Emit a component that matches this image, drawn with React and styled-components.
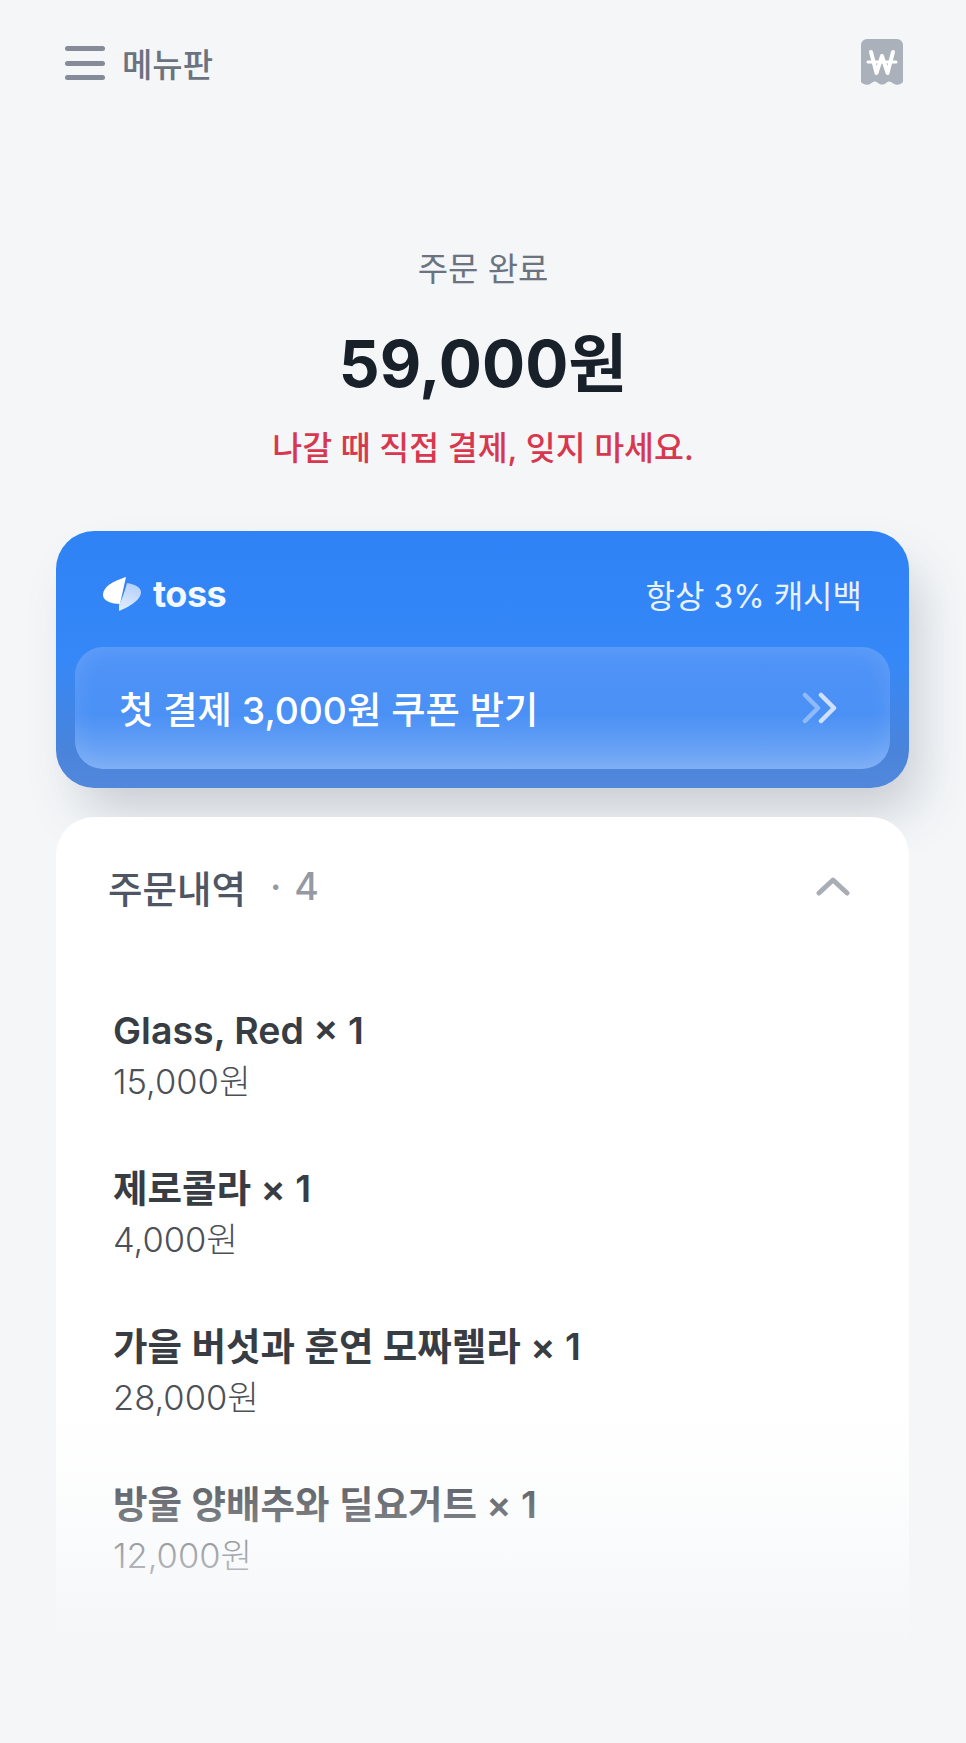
import styled, { createGlobalStyle } from "styled-components";

const GlobalStyle = createGlobalStyle`
  html, body {
    margin: 0;
    padding: 0;
    background: #f4f6f8;
  }
  * { box-sizing: border-box; }
`;

const Page = styled.div`
  width: 966px;
  height: 1743px;
  overflow: hidden;
  background: #f4f6f8;
  font-family: "Inter", "Noto Sans CJK KR", sans-serif;
`;

const TopBar = styled.header`
  display: flex;
  align-items: center;
  justify-content: space-between;
  height: 126px;
  padding: 0 63px 0 65px;
`;

const MenuButton = styled.div`
  display: flex;
  align-items: center;
  gap: 17px;
`;

const MenuIcon = styled.div`
  display: flex;
  flex-direction: column;
  justify-content: space-between;
  width: 40px;
  height: 34px;

  span {
    display: block;
    height: 5px;
    border-radius: 3px;
    background: #868b99;
  }
`;

const MenuLabel = styled.span`
  font-size: 33px;
  font-weight: 500;
  color: #6b7280;
`;

const Summary = styled.section`
  display: flex;
  flex-direction: column;
  align-items: center;
  padding-top: 118px;
`;

const StatusLabel = styled.div`
  font-size: 33px;
  line-height: 50px;
  color: #6b7380;
`;

const TotalPrice = styled.div`
  margin-top: 30px;
  font-size: 64px;
  line-height: 80px;
  font-weight: 700;
  color: #18202a;
`;

const PayNotice = styled.div`
  margin-top: 22px;
  font-size: 32.500px;
  line-height: 46px;
  font-weight: 500;
  color: #d8384f;
`;

const TossCard = styled.section`
  margin: 59px 57px 0 56px;
  height: 257px;
  padding: 0 19px 19px;
  display: flex;
  flex-direction: column;
  border-radius: 38px;
  background: linear-gradient(180deg, #2f82f5 0%, #3688f8 50%, #4a84da 86%, #5288dc 100%);
  box-shadow: 16px 30px 50px -8px rgba(70, 84, 104, 0.26);
`;

const CardTop = styled.div`
  flex: 1;
  display: flex;
  align-items: center;
  justify-content: space-between;
  padding: 10px 28px 0;
`;

const TossBrand = styled.div`
  display: flex;
  align-items: center;
  gap: 12px;
`;

const TossWord = styled.span`
  font-size: 36px;
  font-weight: 700;
  color: #f4f8ff;
  letter-spacing: -0.5px;
`;

const Cashback = styled.span`
  font-size: 32px;
  color: #e9f2ff;
`;

const CouponBar = styled.div`
  height: 122px;
  display: flex;
  align-items: center;
  justify-content: space-between;
  padding: 0 52px 0 44px;
  border-radius: 28px;
  background: linear-gradient(180deg, #5094f8 0%, #4a90f5 55%, #78abf5 100%);
  box-shadow: inset 0 0 26px rgba(255, 255, 255, 0.12);
`;

const CouponText = styled.span`
  font-size: 37.300px;
  font-weight: 500;
  color: #fff;
`;

const OrderPanel = styled.section`
  position: relative;
  margin: 29px 57px 0 56px;
  height: 843px;
  padding: 0 57px;
  border-radius: 38px;
  background: #fff;
  overflow: hidden;
`;

const PanelHeader = styled.div`
  display: flex;
  align-items: center;
  justify-content: space-between;
  height: 138px;
  padding-right: 2px;
`;

const PanelTitle = styled.div`
  display: flex;
  align-items: center;
  margin-left: -5px;
`;

const TitleText = styled.span`
  font-size: 37.500px;
  font-weight: 500;
  color: #4e5665;
`;

const TitleCount = styled.span`
  margin-left: 24px;
  font-size: 37.500px;
  font-weight: 500;
  word-spacing: 3px;
  color: #959aa2;
`;

const OrderList = styled.ul`
  list-style: none;
  margin: 0;
  padding: 49px 0 0;
  display: flex;
  flex-direction: column;
  gap: 46px;
`;

const OrderRow = styled.li`
  display: flex;
  flex-direction: column;
  height: 112px;
`;

const ItemName = styled.div`
  font-size: 37.500px;
  line-height: 54px;
  font-weight: 600;
  color: #383c43;
`;

const ItemPrice = styled.div`
  margin-top: -2px;
  font-size: 34.500px;
  line-height: 52px;
  font-weight: 300;
  color: #4c5057;
`;

// fades the last rows into the page background
const BottomFade = styled.div`
  position: absolute;
  left: 0;
  right: 0;
  bottom: 0;
  height: 250px;
  background: linear-gradient(180deg, rgba(244, 246, 248, 0) 0%, rgba(244, 246, 248, 0.22) 30%, rgba(244, 246, 248, 0.42) 50%, #f4f6f8 92%);
`;

const ReceiptIcon = () => (
  <svg width="42" height="48" viewBox="0 0 42 48">
    <path
      d="M6 0H36a6 6 0 0 1 6 6V43c-3 3.500-7 3.500-10.500 1-3-2-4.500-2-6.500 0-2.500 2-5.500 2-8 0-2-2-3.500-2-6.500 0C8 46.500 3 46.500 0 43V6a6 6 0 0 1 6-6Z"
      fill="#aab1ba"
    />
    <path d="M10 13l5.500 21L21 17l5.500 17L32 13" fill="none" stroke="#fff" strokeWidth="4" strokeLinejoin="round" strokeLinecap="round" />
    <path d="M7 23H35" stroke="#fff" strokeWidth="3" strokeLinecap="round" />
  </svg>
);

const TossLogo = () => (
  <svg width="38" height="34" viewBox="0 0 38 34">
    <defs>
      <linearGradient id="tossRight" x1="0.5" y1="0" x2="0.2" y2="1">
        <stop offset="0" stopColor="#b4d0fa" />
        <stop offset="1" stopColor="#e3eefe" />
      </linearGradient>
    </defs>
    <path d="M23 0 C14 3 0 8 0 18 C0 24 9 27 17 27 Z" fill="#fff" />
    <path d="M24 6 C31 7 38 10 38 15 C38 23 26 30 16 34 L16 28 C19 22 22 14 24 6Z" fill="url(#tossRight)" />
  </svg>
);

const DoubleChevron = () => (
  <svg width="36" height="32" viewBox="0 0 36 32" fill="none" strokeWidth="4.500" strokeLinecap="round" strokeLinejoin="round">
    <path d="M3 3L16 16L3 29" stroke="#8fbafa" />
    <path d="M19 3L32 16L19 29" stroke="#cfe1fd" />
  </svg>
);

const ChevronUp = () => (
  <svg width="34" height="20" viewBox="0 0 34 20" fill="none">
    <path d="M3 17L17 4L31 17" stroke="#a9aeb6" strokeWidth="5" strokeLinecap="round" strokeLinejoin="round" />
  </svg>
);

const orders = [
  { name: "Glass, Red × 1", price: "15,000원" },
  { name: "제로콜라 × 1", price: "4,000원" },
  { name: "가을 버섯과 훈연 모짜렐라 × 1", price: "28,000원" },
  { name: "방울 양배추와 딜요거트 × 1", price: "12,000원" },
];

export default function App() {
  return (
    <Page>
      <GlobalStyle />
      <TopBar>
        <MenuButton>
          <MenuIcon>
            <span />
            <span />
            <span />
          </MenuIcon>
          <MenuLabel>메뉴판</MenuLabel>
        </MenuButton>
        <ReceiptIcon />
      </TopBar>

      <Summary>
        <StatusLabel>주문 완료</StatusLabel>
        <TotalPrice>59,000원</TotalPrice>
        <PayNotice>나갈 때 직접 결제, 잊지 마세요.</PayNotice>
      </Summary>

      <TossCard>
        <CardTop>
          <TossBrand>
            <TossLogo />
            <TossWord>toss</TossWord>
          </TossBrand>
          <Cashback>항상 3% 캐시백</Cashback>
        </CardTop>
        <CouponBar>
          <CouponText>첫 결제 3,000원 쿠폰 받기</CouponText>
          <DoubleChevron />
        </CouponBar>
      </TossCard>

      <OrderPanel>
        <PanelHeader>
          <PanelTitle>
            <TitleText>주문내역</TitleText>
            <TitleCount>· 4</TitleCount>
          </PanelTitle>
          <ChevronUp />
        </PanelHeader>
        <OrderList>
          {orders.map((order) => (
            <OrderRow key={order.name}>
              <ItemName>{order.name}</ItemName>
              <ItemPrice>{order.price}</ItemPrice>
            </OrderRow>
          ))}
        </OrderList>
        <BottomFade />
      </OrderPanel>
    </Page>
  );
}
